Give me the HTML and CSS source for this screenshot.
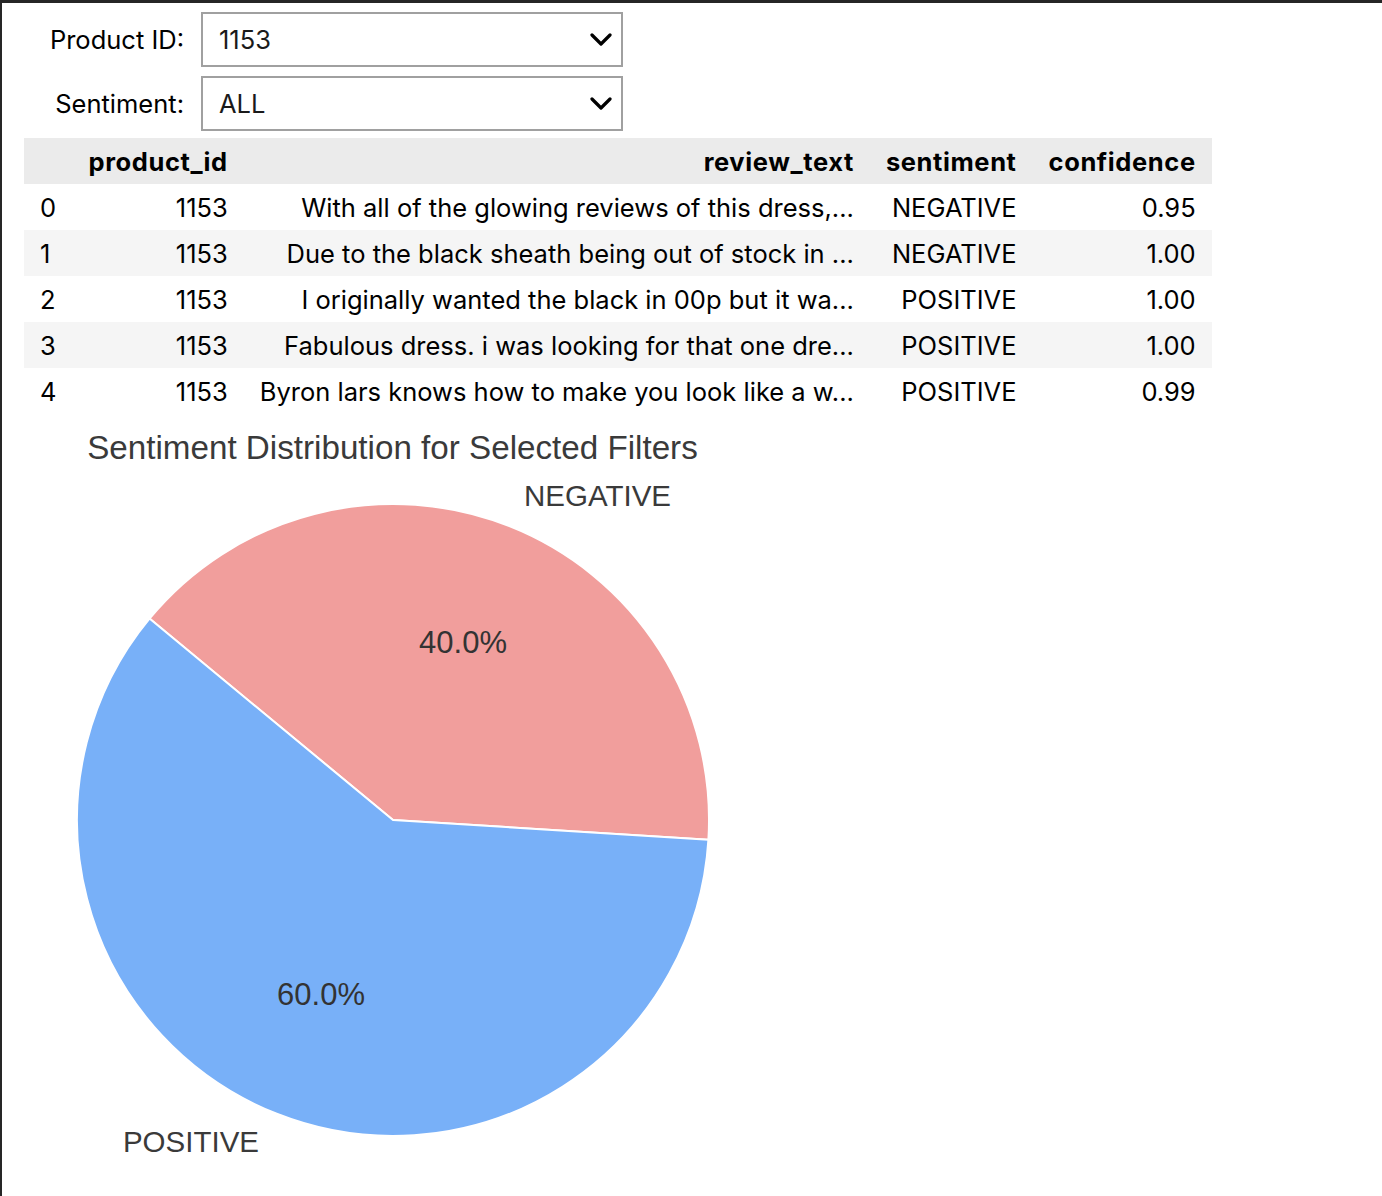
FILE: index.html
```html
<!DOCTYPE html>
<html lang="en">
<head>
<meta charset="utf-8">
<title>Sentiment explorer</title>
<link rel="stylesheet" href="styles.css">
</head>
<body>
<div class="frame">
  <div class="widgets">
    <div class="field">
      <label class="lbl">Product ID:</label>
      <div class="select">
        <span class="value">1153</span>
        <svg class="chev" width="22" height="14" viewBox="0 0 22 14"><path d="M2 2 L11 11 L20 2" fill="none" stroke="#000" stroke-width="3.2" stroke-linecap="round" stroke-linejoin="round"/></svg>
      </div>
    </div>
    <div class="field">
      <label class="lbl">Sentiment:</label>
      <div class="select">
        <span class="value">ALL</span>
        <svg class="chev" width="22" height="14" viewBox="0 0 22 14"><path d="M2 2 L11 11 L20 2" fill="none" stroke="#000" stroke-width="3.2" stroke-linecap="round" stroke-linejoin="round"/></svg>
      </div>
    </div>
  </div>

  <table class="df">
    <thead>
      <tr><th class="idx"></th><th>product_id</th><th>review_text</th><th>sentiment</th><th>confidence</th></tr>
    </thead>
    <tbody>
      <tr><td class="idx">0</td><td>1153</td><td>With all of the glowing reviews of this dress,...</td><td>NEGATIVE</td><td>0.95</td></tr>
      <tr><td class="idx">1</td><td>1153</td><td>Due to the black sheath being out of stock in ...</td><td>NEGATIVE</td><td>1.00</td></tr>
      <tr><td class="idx">2</td><td>1153</td><td>I originally wanted the black in 00p but it wa...</td><td>POSITIVE</td><td>1.00</td></tr>
      <tr><td class="idx">3</td><td>1153</td><td>Fabulous dress. i was looking for that one dre...</td><td>POSITIVE</td><td>1.00</td></tr>
      <tr><td class="idx">4</td><td>1153</td><td>Byron lars knows how to make you look like a w...</td><td>POSITIVE</td><td>0.99</td></tr>
    </tbody>
  </table>

  <svg class="chart" width="760" height="782" viewBox="2 414 760 782">
    <path d="M393,820 L708.4,839.8 A316,316 0 0 0 149.5,618.6 Z" fill="#f19e9c" stroke="#fff" stroke-width="2" stroke-linejoin="round"/>
    <path d="M393,820 L149.5,618.6 A316,316 0 1 0 708.4,839.8 Z" fill="#78b0f8" stroke="#fff" stroke-width="2" stroke-linejoin="round"/>
    <text class="ctitle" x="392.5" y="459" text-anchor="middle">Sentiment Distribution for Selected Filters</text>
    <text class="clabel" x="524" y="506">NEGATIVE</text>
    <text class="clabel" x="259" y="1152" text-anchor="end">POSITIVE</text>
    <text class="cpct" x="463" y="653" text-anchor="middle">40.0%</text>
    <text class="cpct" x="321" y="1005" text-anchor="middle">60.0%</text>
  </svg>
</div>
</body>
</html>
```

FILE: styles.css
```css
html, body {
  margin: 0;
  padding: 0;
  background: #fff;
}

.frame {
  border-top: 3px solid #262626;
  border-left: 2px solid #262626;
  min-height: 1193px;
  box-sizing: border-box;
  padding-top: 9px;
  font-family: Inter, "Liberation Sans", Arial, sans-serif;
  color: #000;
}

.widgets {
  display: flex;
  flex-direction: column;
  gap: 9px;
}

.field {
  display: flex;
  align-items: center;
  gap: 17px;
}

.lbl {
  width: 182px;
  text-align: right;
  font-size: 25.5px;
}

.select {
  width: 422px;
  height: 55px;
  box-sizing: border-box;
  border: 2px solid #a0a0a0;
  display: flex;
  align-items: center;
  justify-content: space-between;
  padding: 0 9px 0 16px;
  font-size: 25.5px;
  color: #1a1a1a;
}

.chev {
  display: block;
}

.df {
  margin: 7px 0 0 22px;
  border-collapse: collapse;
  font-size: 25.5px;
}

.df th, .df td {
  height: 46px;
  padding: 0 16px;
  text-align: right;
  white-space: nowrap;
  vertical-align: middle;
}

.df thead tr {
  background: #ebebeb;
}

.df th {
  font-weight: 700;
  letter-spacing: 0.6px;
}

.df tbody tr:nth-child(even) {
  background: #f5f5f5;
}

.df td.idx {
  text-align: left;
}

.chart {
  display: block;
}

.ctitle {
  font-family: "Liberation Sans", Arial, sans-serif;
  font-size: 33.2px;
  fill: #3a3a3a;
}

.clabel {
  font-family: "Liberation Sans", Arial, sans-serif;
  font-size: 29.5px;
  fill: #3a3a3a;
}

.cpct {
  font-family: "Liberation Sans", Arial, sans-serif;
  font-size: 31px;
  fill: #333;
}
```
